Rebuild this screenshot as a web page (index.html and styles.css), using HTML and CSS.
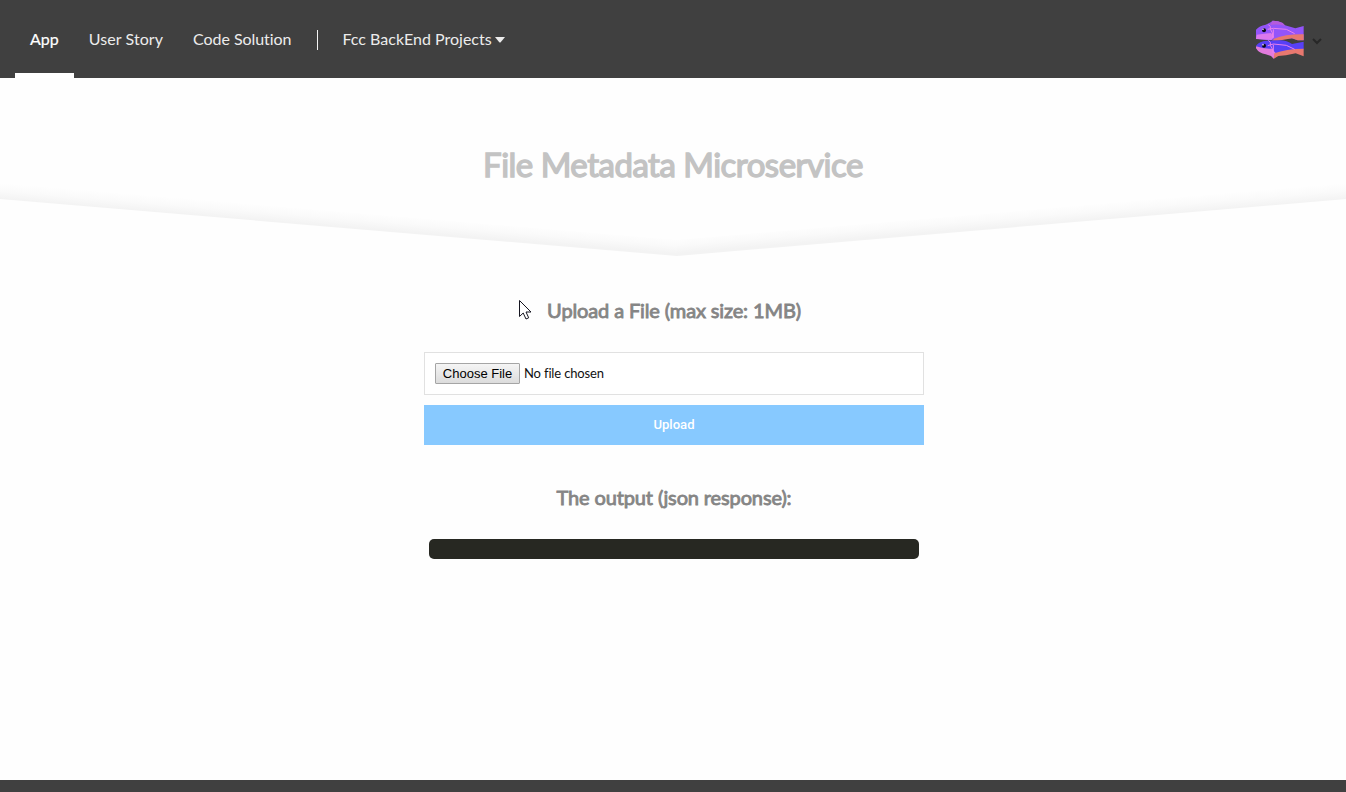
FILE: index.html
```html
<!DOCTYPE html>
<html lang="en">
<head>
<meta charset="utf-8">
<title>File Metadata Microservice</title>
<link rel="stylesheet" href="styles.css">
</head>
<body>
<header class="navbar">
  <nav class="links">
    <a class="link active">App</a>
    <a class="link story">User Story</a>
    <a class="link solution">Code Solution</a>
    <span class="divider"></span>
    <a class="link projects">Fcc BackEnd Projects<svg class="caret" width="10" height="6" viewBox="0 0 10 6"><path d="M0 0H10L5.7 5.2Q5 6 4.3 5.2Z" fill="#ececec"/></svg></a>
  </nav>
  <div class="account">
    <svg width="50" height="42" viewBox="0 0 150 126">
      <path d="M0 35Q10 23 29 20L44 13 50 8Q67 8 80 15L87 22 118 31 143 24V67H125L108 61 60 64 38 67 0 62Z" fill="#9354fa"/>
      <path d="M42 21 50 8Q66 8 80 15L88 24Q66 17 42 21Z" fill="#b55bdd"/>
      <path d="M2 50Q25 47 45 45L54 58 46 66 0 63Z" fill="#db78ed"/>
      <path d="M54 62Q90 48 143 49V67H125L108 61 66 68H48Z" fill="#e8786f"/>
      <path d="M0 83Q10 70 32 68L72 67Q94 68 108 78L143 71V94L55 107 8 91Z" fill="#5740f6"/>
      <path d="M0 85Q25 94 48 92L58 104 72 108 65 112 53 122 45 114 29 109Q9 106 0 91Z" fill="#e27bdd"/>
      <path d="M55 106Q89 92 143 92V115L119 106 90 112 67 114 53 122Z" fill="#e8786f"/>
      <path d="M37 20Q46 24 43 33Q51 43 51 60M35 34 52 31 91 34 116 47M52 34V57M37 67Q46 72 43 82Q51 91 51 106M35 83 52 78 91 82 116 94M52 80V104" fill="none" stroke="#e981ec" stroke-width="3"/>
      <circle cx="24" cy="37" r="6" fill="#0b0a16"/><circle cx="21" cy="34" r="2.5" fill="#e6d7ff"/>
      <circle cx="24" cy="83" r="6" fill="#0b0a16"/><circle cx="21" cy="80" r="2.5" fill="#e6d7ff"/>
    </svg>
    <svg class="chevron" width="10" height="7" viewBox="0 0 10 7"><path d="M1 1 5 5 9 1" fill="none" stroke="#272727" stroke-width="2"/></svg>
  </div>
</header>
<section class="hero">
  <h1>File Metadata Microservice</h1>
  <svg class="fold" viewBox="0 0 1346 80" preserveAspectRatio="none">
    <defs>
      <linearGradient id="left" gradientUnits="userSpaceOnUse" x1="0" y1="20" x2="1.3" y2="4"><stop offset="0" stop-color="#f3f3f3"/><stop offset=".5" stop-color="#fafafa"/><stop offset="1" stop-color="#fefefe"/></linearGradient>
      <linearGradient id="right" gradientUnits="userSpaceOnUse" x1="1346" y1="20" x2="1344.7" y2="4"><stop offset="0" stop-color="#f3f3f3"/><stop offset=".5" stop-color="#fafafa"/><stop offset="1" stop-color="#fefefe"/></linearGradient>
    </defs>
    <path d="M0 4 677 61V77L0 20Z" fill="url(#left)"/>
    <path d="M1346 4 677 61V77L1346 20Z" fill="url(#right)"/>
  </svg>
</section>
<main class="content">
  <h2>Upload a File (max size: 1MB)</h2>
  <div class="picker"><button class="choose">Choose File</button><span class="filename">No file chosen</span></div>
  <button class="upload">Upload</button>
  <h2 class="result-title">The output (json response):</h2>
  <div class="output"></div>
</main>
<footer class="footer"></footer>
<svg class="pointer" width="13" height="20" viewBox="0 0 13 20"><path d="M.5.5V16.5L4.2 13 7 19 9.7 17.8 7 12H12Z" fill="#fff" stroke="#151520"/></svg>
</body>
</html>
```

FILE: styles.css
```css
* { box-sizing: border-box; }
body { margin: 0; height: 792px; display: flex; flex-direction: column; overflow: hidden; background: #fefefe; font-family: Lato, sans-serif; }
.navbar { height: 78px; flex: none; display: flex; justify-content: space-between; background: #404040; padding: 0 24px 0 15px; }
.links { display: flex; align-items: center; }
.link { height: 78px; padding: 0 15px; line-height: 78px; font-size: 16px; color: #ececec; white-space: nowrap; }
.active { color: #fff; border-bottom: 5px solid #fff; -webkit-text-stroke: .2px #fff; }
.story { letter-spacing: .08px; }
.solution { letter-spacing: -.05px; }
.divider { width: 1px; height: 20px; margin: 2px 10px 0; background: #f4f4f4; }
.caret { margin-left: 3px; vertical-align: 2px; }
.account { display: flex; align-items: center; gap: 6px; }
.chevron { margin-top: 4px; }
.hero { height: 180px; flex: none; display: flex; flex-direction: column; justify-content: space-between; }
h1, h2 { margin: 0; font-weight: 400; text-align: center; white-space: nowrap; }
h1 { padding-top: 65px; font-size: 33px; line-height: 42px; letter-spacing: -.5px; color: #c3c3c3; -webkit-text-stroke: 1.4px #c3c3c3; }
.fold { display: block; width: 100%; height: 80px; margin-top: -6px; flex: none; }
.content { flex: 1; width: 500px; margin-left: 424px; padding-top: 39px; display: flex; flex-direction: column; }
h2 { font-size: 20px; line-height: 26px; letter-spacing: -.13px; color: #858585; -webkit-text-stroke: .85px #858585; }
.picker { height: 43px; flex: none; margin-top: 29px; padding: 0 10px; border: 1px solid #e1e1e1; display: flex; align-items: center; gap: 4px; font-size: 13px; color: #111; background: #fff; }
.filename { padding-bottom: 2px; letter-spacing: -.15px; }
.choose { width: 85px; height: 21px; padding: 0; border: 1px solid #a5a5a5; border-radius: 1px; background: linear-gradient(#f5f5f5, #dcdcdc); font: 13px "Liberation Sans", sans-serif; color: #000; }
.upload { height: 40px; flex: none; margin-top: 10px; padding: 0 0 2px; border: 0; background: #87c9ff; color: #fff; font: 500 13.1px Roboto, sans-serif; }
.result-title { margin-top: 39px; }
.output { height: 20px; margin: 29px 5px 0; border-radius: 5px; background: #272822; }
.footer { height: 12px; flex: none; background: #404040; }
.pointer { position: absolute; left: 519px; top: 300px; }
```
